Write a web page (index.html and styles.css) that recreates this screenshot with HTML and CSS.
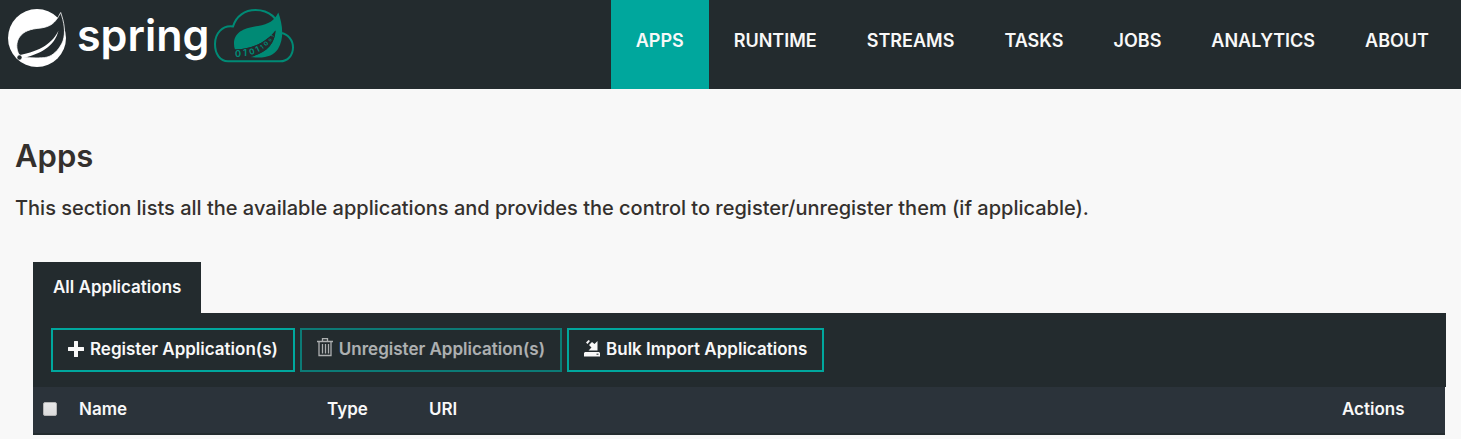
FILE: index.html
```html
<!DOCTYPE html>
<html lang="en">
<head>
<meta charset="utf-8">
<title>Apps</title>
<link rel="stylesheet" href="styles.css">
</head>
<body>
<header class="topbar">
  <a class="brand" href="#" aria-label="Spring Cloud Data Flow">
    <svg class="brand-logo" viewBox="0 0 288 60" aria-hidden="true">
      <circle cx="29" cy="30" r="29" fill="#fff"/>
      <path d="M52.700 4.500C47 16 42 18.500 33 20C22 21 16 23 11.500 29C8 34 8 41 11 46.500L17 49.500C26 50 36 50.500 41 48.500C47 46 52 40 55 33C58 24 56 14 52.700 4.500Z" fill="#232b2e" stroke="#fff" stroke-width=".8"/>
      <path d="M50.500 22.500C45 34 34 43 10 47.500L12 50.500C32 47 47 38 50.500 22.500Z" fill="#fff"/>
      <circle cx="11.500" cy="49.500" r="2.200" fill="#232b2e"/>
      <text class="brand-word" x="69" y="43">spring</text>
      <path d="M220 53.300H272C280 53.300 285 47 285 39.500C285 32 280 26 273 25C271 10 261 2 247.500 2C237 2 228 8 225 18.500C214 17 207 26 207 36C207 46 212 53.300 220 53.300Z" fill="none" stroke="#008a75" stroke-width="2"/>
      <path d="M270.300 4.500C266 13 261 16 250 18C236 20 226 24 226 36Q226 39 227 41.500C244 41 259 34 267.500 22.500C267 36 258 45 242 49C257 51 265 48 270 41C277 29 274 15 270.300 4.500Z" fill="#008a75"/>
      <path d="M227 41.500C244 41 259 34 267.500 22.500C267 36 258 45 242 49L226 50Z" fill="#232b2e"/>
      <g class="brand-bits">
        <text class="bit-large" x="227" y="48.500">0</text>
        <text class="bit-large" x="235" y="48">1</text>
        <text class="bit-medium" transform="translate(242 47) rotate(-15)">0</text>
        <text class="bit-medium" transform="translate(249 44.500) rotate(-25)">1</text>
        <text class="bit-small" transform="translate(254 41.500) rotate(-35)">1</text>
        <text class="bit-small" transform="translate(258 38.500) rotate(-45)">0</text>
        <text class="bit-tiny" transform="translate(262.500 34) rotate(-55)">0</text>
        <text class="bit-tiny" transform="translate(265.500 29.500) rotate(-65)">1</text>
      </g>
    </svg>
  </a>
  <nav class="nav">
    <a class="nav-link nav-link-active" href="#">APPS</a>
    <a class="nav-link" href="#">RUNTIME</a>
    <a class="nav-link" href="#">STREAMS</a>
    <a class="nav-link" href="#">TASKS</a>
    <a class="nav-link" href="#">JOBS</a>
    <a class="nav-link" href="#">ANALYTICS</a>
    <a class="nav-link" href="#">ABOUT</a>
  </nav>
</header>
<main class="page">
  <h1 class="title">Apps</h1>
  <p class="lead">This section lists all the available applications and provides the control to register/unregister them (if applicable).</p>
  <section class="apps">
    <a class="tab" href="#">All Applications</a>
    <div class="toolbar">
      <button class="btn" type="button">
        <svg class="icon" viewBox="0 0 16 18" aria-hidden="true"><path d="M6.500 1H9.500Q10 1 10 1.500V7H15.500Q16 7 16 7.500V10.500Q16 11 15.500 11H10V16.500Q10 17 9.500 17H6.500Q6 17 6 16.500V11H.5Q0 11 0 10.500V7.500Q0 7 .5 7H6V1.500Q6 1 6.500 1Z" fill="currentColor"/></svg>
        Register Application(s)
      </button>
      <button class="btn" type="button" disabled>
        <svg class="icon icon-tall" viewBox="0 0 16 22" aria-hidden="true"><path d="M0 3.500H16M5.500 3V.5H10.500V3M2 4V17.500H14V4M5.500 6V15.500M8.500 6V15.500M11.500 6V15.500" fill="none" stroke="currentColor" stroke-width="1.300"/></svg>
        Unregister Application(s)
      </button>
      <button class="btn" type="button">
        <svg class="icon" viewBox="0 0 16 18" aria-hidden="true"><path d="M1 12H15L16 13V16.500H0V13ZM13.500 1V10.500H4.500L7.500 7.500L5 5L8 2L10.500 4ZM2 2.500L4.500 0L6 1L3.500 4Z" fill="currentColor"/><path d="M12.500 14.200H14.500" stroke="#232b2e"/></svg>
        Bulk Import Applications
      </button>
    </div>
    <table class="table">
      <thead>
        <tr>
          <th class="col-check"><input class="check" type="checkbox" aria-label="Select all applications"></th>
          <th class="col-name">Name</th>
          <th class="col-type">Type</th>
          <th>URI</th>
          <th class="col-actions">Actions</th>
        </tr>
      </thead>
    </table>
  </section>
</main>
</body>
</html>
```
FILE: styles.css
```css
* { box-sizing: border-box; }
body { margin: 0; background: #f8f8f8; color: #34302d; font-family: Inter, "Open Sans", sans-serif; }
.topbar { display: flex; justify-content: space-between; align-items: stretch; background: #232b2e; padding: 0 7px 0 8px; }
.brand { padding-top: 8px; }
.brand-logo { display: block; width: 288px; height: 60px; }
.brand-word { font: 600 43px Inter, sans-serif; fill: #fff; }
.brand-bits { font-family: Inter, sans-serif; font-weight: 700; fill: #008a75; }
.bit-large { font-size: 9px; }
.bit-medium { font-size: 8px; }
.bit-small { font-size: 6px; }
.bit-tiny { font-size: 4px; }
.nav { display: flex; }
.nav-link { padding: 29px 25px 36px; font-size: 18px; font-weight: 600; line-height: 24px; color: #f8f8f8; text-decoration: none; }
.nav-link-active { background: #00a79d; }
.page { padding: 47px 15px 4px; }
.title { margin: 0; font-size: 31px; font-weight: 600; line-height: 40px; }
.lead { margin: 17px 0 0; font-size: 20px; font-weight: 500; line-height: 30px; }
.apps { margin: 39px 0 0 18px; }
.tab { display: inline-block; vertical-align: top; padding: 13px 20px 14px; background: #232b2e; color: #f8f8f8; font-size: 17px; font-weight: 600; line-height: 24px; text-decoration: none; }
.toolbar { display: flex; gap: 5px; padding: 15px 18px; background: #232b2e; }
.btn { display: flex; align-items: center; gap: 6px; height: 44px; padding: 0 15px 2px; border: 2px solid #00a79d; background: transparent; color: #f8f8f8; font: 600 17px/24px Inter, "Open Sans", sans-serif; }
.btn:disabled { opacity: .65; }
.icon { width: 16px; height: 18px; }
.icon-tall { height: 22px; }
.table { width: calc(100% - 1px); border-collapse: collapse; table-layout: fixed; background: #2b333a; color: #f8f8f8; font-size: 17px; line-height: 24px; }
.table th { padding: 10px 10px 12px; border-bottom: 2px solid #232b2e; font-weight: 600; text-align: left; }
.table .col-check { width: 36px; }
.check { display: block; width: 14px; height: 14px; margin: 0; appearance: none; border: 1px solid #b5b5b5; border-radius: 2px; background: linear-gradient(#e8e8e8, #dcdcdc); }
.check:checked { background: #00a79d; }
.col-name { width: 248px; }
.col-type { width: 102px; }
.col-actions { width: 113px; }
```
